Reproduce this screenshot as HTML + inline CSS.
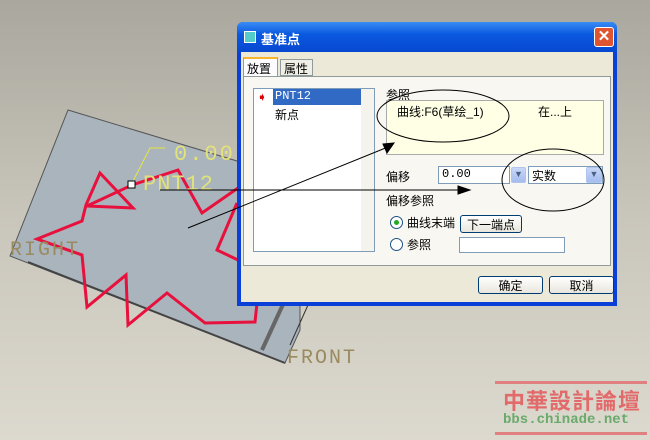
<!DOCTYPE html>
<html><head><meta charset="utf-8"><style>
*{margin:0;padding:0;box-sizing:border-box}
body{width:650px;height:440px;overflow:hidden;position:relative;background:linear-gradient(#a9a79e,#c9c6bb 50%,#dcd9cf);font-family:"Liberation Sans","Noto Sans CJK SC",sans-serif;font-size:12px;color:#000}
.a{position:absolute}
.dlg{left:237px;top:22px;width:380px;height:284px;background:#0a3fd8;border-radius:6px 6px 0 0}
.tb{left:0;top:0;width:380px;height:30px;background:linear-gradient(#3a8cf5,#0a5ae0 40%,#0748d0);border-radius:6px 6px 0 0;color:#fff;font-weight:bold;font-size:13px}
.body{left:4px;top:30px;width:372px;height:250px;background:#ece9d8}
.btn{background:linear-gradient(#fff,#e8e6dc);border:1px solid #003c74;border-radius:3px;text-align:center;font-size:12px}
.dd{background:linear-gradient(#c7d7f7,#a5bcef);border:1px solid #b0c4ee;border-radius:2px;color:#4d6185;text-align:center;font-size:9px;line-height:13px}
</style></head><body>
<svg class="a" style="left:0;top:0" width="650" height="440">
<polygon points="68,110 300,180 300,330 285,363 10,256" fill="#a9b4bd" stroke="#555" stroke-width="1"/>
<line x1="28" y1="262" x2="285" y2="363" stroke="#444" stroke-width="2"/>
<line x1="262" y1="350" x2="285" y2="300" stroke="#666" stroke-width="4"/>
<line x1="290" y1="345" x2="308" y2="305" stroke="#333"/>
<polyline points="132,185 178,170 202,213 238,188" fill="none" stroke="#e8103c" stroke-width="3"/>
<polyline points="237,203 217,250 238,260" fill="none" stroke="#e8103c" stroke-width="3"/>
<polyline points="257,303 255,322 205,323 167,293 128,325 126,275 87,307 82,255 37,239 82,221 86,205 100,173 133,208 87,206 132,185" fill="none" stroke="#e8103c" stroke-width="3"/>
<polyline points="132,183 150,148 165,148" fill="none" stroke="#e6e640"/>
<rect x="128" y="181" width="7" height="7" fill="#fff" stroke="#000"/>
<text x="174" y="160" fill="#e2e27a" font-family="Liberation Mono" font-size="22" letter-spacing="2">0.00</text>
<text x="143" y="190" fill="#e2e27a" font-family="Liberation Mono" font-size="22" letter-spacing="1">PNT12</text>
<text x="10" y="255" fill="#9a8a60" font-family="Liberation Mono" font-size="20" letter-spacing="2">RIGHT</text>
<text x="287" y="363" fill="#9a8a60" font-family="Liberation Mono" font-size="20" letter-spacing="2">FRONT</text>
</svg>
<div class="a dlg">
 <div class="a tb"><div class="a" style="left:7px;top:9px;width:12px;height:12px;background:#5cc;border:1px solid #fff"></div><div class="a" style="left:24px;top:7px">基准点</div>
 <div class="a" style="left:357px;top:5px;width:20px;height:20px;background:#e0552f;border:1px solid #fff;border-radius:3px;color:#fff;text-align:center;line-height:18px;font-size:15px">✕</div></div>
 <div class="a body">
  <div class="a" style="left:2px;top:5px;width:35px;height:19px;background:#fcfcfe;border:1px solid #919b9c;border-bottom:none;border-top:2px solid #f8b530;padding:1px 3px">放置</div>
  <div class="a" style="left:39px;top:7px;width:33px;height:17px;border:1px solid #919b9c;padding:0 3px;background:#f0efe6">属性</div>
  <div class="a" style="left:2px;top:24px;width:368px;height:190px;border:1px solid #919b9c;background:#f8f7f1"></div>
  <div class="a" style="left:12px;top:36px;width:122px;height:164px;background:#fff;border:1px solid #7f9db9"></div>
  <div class="a" style="left:16px;top:38px;color:#d00;font-size:12px">➧</div>
  <div class="a" style="left:32px;top:37px;width:88px;height:16px;background:#316ac5;color:#fff;font-family:'Liberation Mono';padding-left:2px">PNT12</div>
  <div class="a" style="left:34px;top:54px">新点</div>
  <div class="a" style="left:120px;top:37px;width:13px;height:162px;background:#f4f3ee"></div>
  <div class="a" style="left:145px;top:34px">参照</div>
  <div class="a" style="left:145px;top:48px;width:218px;height:55px;background:#ffffe6;border:1px solid #aaa"></div>
  <div class="a" style="left:156px;top:51px">曲线:F6(草绘_1)</div>
  <div class="a" style="left:297px;top:51px">在...上</div>
  <div class="a" style="left:145px;top:116px">偏移</div>
  <div class="a" style="left:197px;top:114px;width:72px;height:18px;background:#fff;border:1px solid #7f9db9;padding-left:3px;font-family:'Liberation Mono'">0.00</div>
  <div class="a dd" style="left:270px;top:115px;width:15px;height:16px">▼</div>
  <div class="a" style="left:287px;top:114px;width:75px;height:18px;background:#fff;border:1px solid #7f9db9;padding-left:3px">实数</div>
  <div class="a dd" style="left:345px;top:115px;width:16px;height:16px">▼</div>
  <div class="a" style="left:145px;top:140px">偏移参照</div>
  <div class="a" style="left:149px;top:164px;width:13px;height:13px;border:1px solid #1c5180;border-radius:50%;background:#fff"><div style="margin:3px;width:5px;height:5px;border-radius:50%;background:#2a2"></div></div>
  <div class="a" style="left:166px;top:162px">曲线末端</div>
  <div class="a btn" style="left:219px;top:163px;width:62px;height:18px">下一端点</div>
  <div class="a" style="left:149px;top:186px;width:13px;height:13px;border:1px solid #1c5180;border-radius:50%;background:#fff"></div>
  <div class="a" style="left:166px;top:184px">参照</div>
  <div class="a" style="left:218px;top:185px;width:106px;height:16px;background:#fff;border:1px solid #7f9db9"></div>
  <div class="a btn" style="left:237px;top:224px;width:65px;height:18px">确定</div>
  <div class="a btn" style="left:308px;top:224px;width:65px;height:18px">取消</div>
 </div>
</div>
<svg class="a" style="left:0;top:0" width="650" height="440" fill="none" stroke="#000">
<line x1="160" y1="190" x2="462" y2="190"/>
<polygon points="458,186 470,190 458,194" fill="#000"/>
<line x1="188" y1="228" x2="388" y2="147"/>
<polygon points="383,144 394,143 387,153" fill="#000"/>
<ellipse cx="443" cy="116" rx="66" ry="26"/>
<ellipse cx="553" cy="180" rx="51" ry="31"/>
</svg>
<div class="a" style="left:495px;top:381px;width:152px;height:3px;background:#e08080"></div>
<div class="a" style="left:495px;top:432px;width:152px;height:3px;background:#e08080"></div>
<div class="a" style="left:503px;top:384px;color:#e26a6a;font-size:22px;font-weight:bold;letter-spacing:1px">中華設計論壇</div>
<div class="a" style="left:503px;top:412px;color:#6aaa6a;font-size:14px;font-weight:bold;font-family:'Liberation Mono'">bbs.chinade.net</div>
</body></html>
